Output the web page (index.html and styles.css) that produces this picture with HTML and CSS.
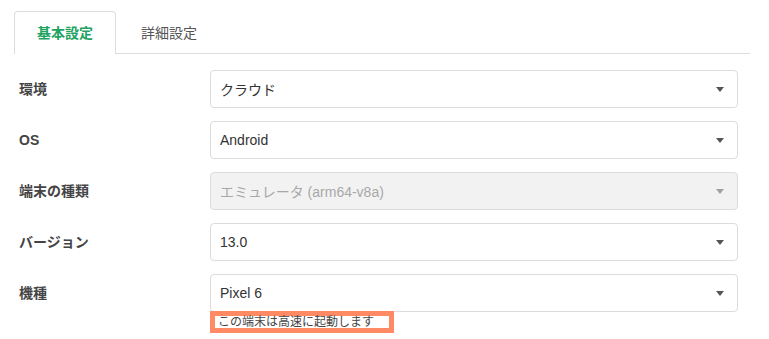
FILE: index.html
```html
<!DOCTYPE html>
<html lang="ja">
<head>
<meta charset="utf-8">
<title>設定</title>
<link rel="stylesheet" href="styles.css">
</head>
<body>
<div class="page">
  <ul class="tabs">
    <li class="tab active">基本設定</li>
    <li class="tab">詳細設定</li>
  </ul>
  <form class="form">
    <div class="row">
      <label class="label">環境</label>
      <div class="field">
        <div class="select"><span>クラウド</span><i class="caret"></i></div>
      </div>
    </div>
    <div class="row">
      <label class="label">OS</label>
      <div class="field">
        <div class="select"><span>Android</span><i class="caret"></i></div>
      </div>
    </div>
    <div class="row">
      <label class="label">端末の種類</label>
      <div class="field">
        <div class="select disabled"><span>エミュレータ (arm64-v8a)</span><i class="caret"></i></div>
      </div>
    </div>
    <div class="row">
      <label class="label">バージョン</label>
      <div class="field">
        <div class="select"><span>13.0</span><i class="caret"></i></div>
      </div>
    </div>
    <div class="row last">
      <label class="label">機種</label>
      <div class="field">
        <div class="select"><span>Pixel 6</span><i class="caret"></i></div>
        <div class="hint">この端末は高速に起動します</div>
      </div>
    </div>
  </form>
</div>
</body>
</html>
```

FILE: styles.css
```css
* { box-sizing: border-box; }
html, body { margin: 0; padding: 0; background: #fff; }
body {
  font-family: "Liberation Sans", "Noto Sans CJK JP", sans-serif;
  color: #333;
  width: 769px;
  height: 339px;
  overflow: hidden;
}
.page { padding: 11px 19px 0 14px; }
.tabs {
  list-style: none;
  margin: 0;
  padding: 0;
  display: flex;
  border-bottom: 1px solid #ddd;
}
.tab {
  height: 43px;
  line-height: 42px;
  padding: 0 22px;
  margin-right: 2px;
  margin-bottom: -1px;
  font-size: 14px;
  color: #555;
  border: 1px solid transparent;
  border-bottom: none;
  border-radius: 4px 4px 0 0;
}
.tab.active {
  border-color: #ddd;
  background: #fff;
  color: #1ea362;
  font-weight: bold;
}
.form { padding: 16px 12px 0 5px; }
.row {
  display: flex;
  align-items: flex-start;
  margin-bottom: 13px;
}
.label {
  width: 191px;
  flex: none;
  height: 38px;
  line-height: 38px;
  font-size: 14px;
  font-weight: bold;
  color: #444;
}
.field { flex: 1; }
.select {
  height: 38px;
  border: 1px solid #dcdcdc;
  border-radius: 4px;
  background: #fff;
  display: flex;
  align-items: center;
  justify-content: space-between;
  padding: 0 13px 0 9px;
  font-size: 14px;
  color: #333;
}
.select.disabled { background: #f2f2f2; color: #a8a8a8; }
.caret {
  width: 0;
  height: 0;
  border-left: 4.5px solid transparent;
  border-right: 4.5px solid transparent;
  border-top: 5px solid #555;
  margin-top: 1px;
}
.disabled .caret { border-top-color: #a0a0a0; }
.hint {
  position: relative;
  display: inline-block;
  margin-top: -4px;
  border: 5px solid #ff8a63;
  background: #fff;
  height: 22px;
  line-height: 12px;
  padding: 0 15px 0 3px;
  font-size: 12px;
  color: #444;
}
```
